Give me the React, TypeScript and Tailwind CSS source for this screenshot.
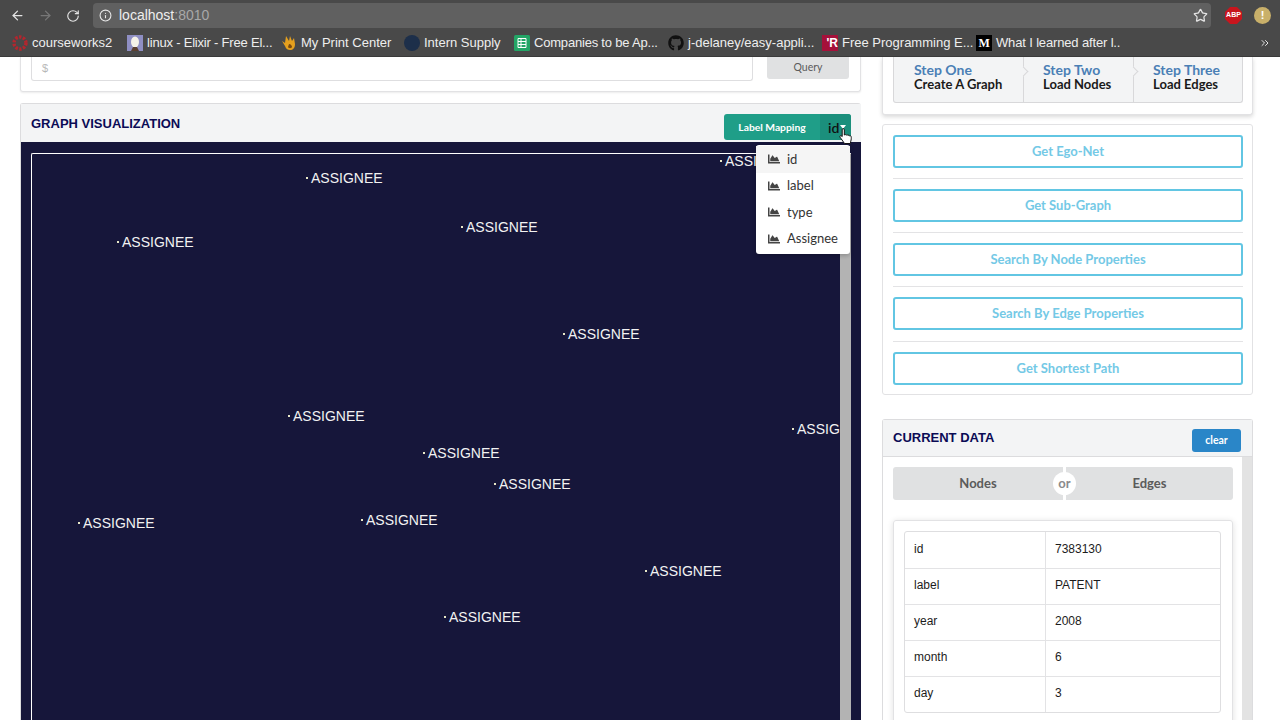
import { ArrowLeft, ArrowRight, RotateCw, Info, Star, ChevronsRight } from 'lucide-react';
import { FaChartArea, FaGithub } from 'react-icons/fa';

const labels = [
  { x: 311, y: 178 },
  { x: 466, y: 227 },
  { x: 122, y: 242 },
  { x: 568, y: 334 },
  { x: 293, y: 416 },
  { x: 428, y: 453 },
  { x: 499, y: 484 },
  { x: 83, y: 523 },
  { x: 366, y: 520 },
  { x: 650, y: 571 },
  { x: 449, y: 617 },
  { x: 725, y: 161 },
  { x: 797, y: 429 },
];

const actions = ['Get Ego-Net', 'Get Sub-Graph', 'Search By Node Properties', 'Search By Edge Properties', 'Get Shortest Path'];

const rows = [
  ['id', '7383130'],
  ['label', 'PATENT'],
  ['year', '2008'],
  ['month', '6'],
  ['day', '3'],
];

function Bookmark({ icon, text, className }: { icon: React.ReactNode; text: string; className: string }) {
  return (
    <div className={`flex items-center shrink-0 ${className}`}>
      <span className="w-4 h-4 flex items-center justify-center mr-1 shrink-0">{icon}</span>
      <span className="whitespace-nowrap">{text}</span>
    </div>
  );
}

function BrowserChrome() {
  return (
    <div className="h-[57px] shrink-0 bg-[#494949] font-['Liberation_Sans',sans-serif] text-[#eeeeee] border-b border-[#3a3a3a]">
      <div className="h-[29px] flex items-center pt-[2px]">
        <ArrowLeft className="ml-[10px] w-[15px] h-[15px] text-[#e4e4e4]" />
        <ArrowRight className="ml-[13px] w-[15px] h-[15px] text-[#777777]" />
        <RotateCw className="ml-[13px] w-[14px] h-[14px] text-[#e4e4e4]" />
        <div className="ml-[13px] w-[1118px] h-[25px] bg-[#606060] rounded-[4px] flex items-center pl-[6px] pr-[2px]">
          <Info className="w-[13px] h-[13px] text-[#e8e8e8]" />
          <span className="ml-[7px] text-[14px]">localhost<span className="text-[#a8a8a8]">:8010</span></span>
          <Star className="ml-auto mr-[1px] w-[15px] h-[15px] text-[#e4e4e4]" />
        </div>
        <div className="ml-[14px] w-[17px] h-[17px] bg-[#c8151d] [clip-path:polygon(30%_0,70%_0,100%_30%,100%_70%,70%_100%,30%_100%,0_70%,0_30%)] flex items-center justify-center text-[7px] font-bold text-white">ABP</div>
        <div className="ml-[12px] w-[17px] h-[17px] bg-[#c9b06a] rounded-full flex items-center justify-center text-[11px] font-bold text-white">!</div>
      </div>
      <div className="h-[27px] flex items-center text-[13px] pl-[12px]">
        <Bookmark
          className="w-[115px]"
          text="courseworks2"
          icon={
            <svg viewBox="0 0 16 16" className="w-4 h-4">
              <circle cx="8" cy="8" r="6" fill="none" stroke="#b3262e" strokeWidth="3.4" strokeDasharray="2.4 1.4" />
            </svg>
          }
        />
        <Bookmark
          className="w-[154px] tracking-[-0.2px]"
          text="linux - Elixir - Free El..."
          icon={
            <svg viewBox="0 0 16 16" className="w-4 h-4">
              <rect width="16" height="16" fill="#8f8fc4" />
              <ellipse cx="8" cy="7" rx="4" ry="5.5" fill="#f4f1e8" />
              <path d="M4 16l2-4h4l2 4z" fill="#5a4030" />
            </svg>
          }
        />
        <Bookmark
          className="w-[123px]"
          text="My Print Center"
          icon={
            <svg viewBox="0 0 16 16" className="w-4 h-4">
              <path d="M5 1l3 5 1-5 2 5 2-3 1 6c0 4-2 6-5 6-2 0-4-1-5-4L1 6l3 2z" fill="#e5a01e" />
              <path d="M8 9c2 0 3 2 3 3-1 2-4 1-4 0z" fill="#7b4a10" />
            </svg>
          }
        />
        <Bookmark
          className="w-[110px]"
          text="Intern Supply"
          icon={<span className="w-4 h-4 rounded-full bg-[#1d2f4a]" />}
        />
        <Bookmark
          className="w-[154px] tracking-[-0.2px]"
          text="Companies to be Ap..."
          icon={
            <svg viewBox="0 0 16 16" className="w-4 h-4">
              <rect width="16" height="16" rx="1.5" fill="#23a566" />
              <path d="M4 3.5h8v9H4zM4 6.5h8M4 9.5h8M7 3.5v9" fill="none" stroke="#ffffff" strokeWidth="1" />
            </svg>
          }
        />
        <Bookmark
          className="w-[154px]"
          text="j-delaney/easy-appli..."
          icon={<FaGithub className="w-4 h-4 text-[#111111]" />}
        />
        <Bookmark
          className="w-[154px]"
          text="Free Programming E..."
          icon={
            <span className="w-4 h-4 bg-[#a5113a] text-[12px] leading-4 font-bold text-white text-right overflow-hidden whitespace-nowrap">'R</span>
          }
        />
        <Bookmark
          className="tracking-[-0.15px]"
          text="What I learned after l.."
          icon={
            <span className="w-4 h-4 bg-black text-white text-[12px] leading-4 text-center font-bold font-['Liberation_Serif',serif]">M</span>
          }
        />
        <ChevronsRight className="ml-auto mr-[9px] w-[12px] h-[12px] text-[#e4e4e4]" />
      </div>
    </div>
  );
}

function GraphCard() {
  return (
    <div className="mt-[11px] rounded-t-[3px] border border-[#dcdcde] border-b-0 border-r-0 relative">
      <div className="h-[38px] bg-[#f3f4f5] flex items-center pl-[10px] pt-[1px] relative">
        <span className="text-[13px] font-bold text-[#0b0b55] font-['Liberation_Sans',sans-serif]">GRAPH VISUALIZATION</span>
        <div className="absolute left-[703px] top-[10px] w-[127px] h-[26px] bg-[#1f9e88] rounded-[3px] flex items-center font-['Lato',sans-serif]">
          <span className="w-[96px] pt-[1px] text-center text-white text-[10.3px] font-bold">Label Mapping</span>
          <span className="w-[31px] h-full bg-[#1b8f7c] rounded-r-[3px] flex items-center pl-[8px] text-[14px] font-semibold text-[#111111]">
            id
            <span className="ml-[1px] w-0 h-0 border-x-[3px] border-x-transparent border-t-[4px] border-t-white" />
          </span>
        </div>
      </div>
      <div className="h-[600px] bg-[#16163a] pt-[11px] pl-[10px] pr-[10px]">
        <div className="relative h-[600px] border-t border-l border-white rounded-tl-[2px] overflow-hidden flex justify-end">
          {labels.map((l) => (
            <div
              key={`${l.x}-${l.y}`}
              className="absolute flex items-center text-[14px] text-[#f2f2f2] font-['Liberation_Sans',sans-serif] leading-none"
              style={{ left: l.x - 37, top: l.y - 161 }}
            >
              <span className="w-[2px] h-[2px] bg-[#e8e8c8] mr-[3px]" />
              ASSIGNEE
            </div>
          ))}
          <div className="relative w-[11px] h-full bg-[#b3b3b3]" />
        </div>
      </div>
    </div>
  );
}

function Dropdown() {
  return (
    <div className="absolute left-[756px] top-[145px] w-[94px] h-[109px] bg-white rounded-[3px] shadow-[0_2px_4px_rgba(0,0,0,0.2)] pt-[1px] font-['Lato',sans-serif] text-[13px] text-[#333333]">
      {['id', 'label', 'type', 'Assignee'].map((item, i) => (
        <div key={item} className={`h-[26.6px] flex items-center pl-[12px] ${i === 0 ? 'bg-[#f5f5f5]' : ''}`}>
          <FaChartArea className="w-[12px] h-[12px] mr-[7px] text-[#444444]" />
          {item}
        </div>
      ))}
    </div>
  );
}

function Cursor() {
  return (
    <svg viewBox="0 0 16 18" className="absolute left-[838px] top-[127px] w-[16px] h-[18px]">
      <path
        d="M5 1.5c.8 0 1.3.6 1.3 1.3V8l.6-.2c.6-.4 1.2-.2 1.5.2.5-.3 1.2-.2 1.6.3.5-.3 1.3-.1 1.6.5.5-.2 1.4 0 1.6.8.2 1 .1 3-.4 4.5l-.5 2.4H6.5L3 11.5C2 10.3 1.6 9.5 2 9c.5-.5 1.4-.2 2.2.6V2.8c0-.7.2-1.3.8-1.3z"
        fill="#ffffff"
        stroke="#111111"
        strokeWidth="1"
      />
    </svg>
  );
}

function StepsCard() {
  const steps = [
    { title: 'Step One', sub: 'Create A Graph', w: 'w-[130px] pl-[20px]' },
    { title: 'Step Two', sub: 'Load Nodes', w: 'w-[110px] pl-[19px]' },
    { title: 'Step Three', sub: 'Load Edges', w: 'flex-1 pl-[19px]' },
  ];
  return (
    <div className="pl-[10px] pr-[9px] pb-[11px] border-x border-b border-[#e2e2e4] rounded-b-[3px] shadow-[0_2px_4px_rgba(0,0,0,0.15)] bg-white">
      <div className="h-[46px] flex bg-[#f3f4f5] border-x border-b border-[#d8d8da] rounded-b-[3px] font-['Lato',sans-serif]">
        {steps.map((s, i) => (
          <div key={s.title} className={`relative ${s.w} ${i < 2 ? 'border-r border-[#d8d8da]' : ''}`}>
            <div className="text-[14px] font-bold text-[#4a7fb5] leading-[15px] mt-[5px]">{s.title}</div>
            <div className="text-[13px] font-bold text-[#1a1a1a] leading-[13px] mt-[1px]">{s.sub}</div>
            {i < 2 && (
              <span className="absolute right-[-4px] top-[11px] w-[7px] h-[7px] rotate-45 bg-[#f3f4f5] border-t border-r border-[#d8d8da]" />
            )}
          </div>
        ))}
      </div>
    </div>
  );
}

function ActionsCard() {
  return (
    <div className="mt-[9px] h-[271px] pl-[10px] pr-[9px] pt-[10px] border border-[#e2e2e4] rounded-[3px] bg-white font-['Lato',sans-serif]">
      {actions.map((a, i) => (
        <div key={a}>
          <div className="h-[33px] border-2 border-[#62c6e3] rounded-[3px] flex items-center justify-center text-[13px] font-bold text-[#74c9e6]">{a}</div>
          {i < 4 && <div className={`border-t border-[#e3e3e5] ${i === 3 ? 'mt-[11px] mb-[10px]' : 'mt-[10px] mb-[10px]'}`} />}
        </div>
      ))}
    </div>
  );
}

function CurrentDataCard() {
  return (
    <div className="mt-[24px] border border-[#dcdcde] border-b-0 rounded-t-[3px] bg-white">
      <div className="h-[37px] bg-[#f3f4f5] border-b border-[#dcdcde] flex items-center pl-[10px] pr-[11px] justify-between">
        <span className="text-[13px] font-bold text-[#0b0b55] font-['Liberation_Sans',sans-serif]">CURRENT DATA</span>
        <span className="w-[49px] h-[23px] mt-[5px] bg-[#2a86c8] rounded-[3px] text-white text-[10.5px] font-bold flex items-center justify-center font-['Lato',sans-serif]">clear</span>
      </div>
      <div className="flex h-[300px]">
        <div className="w-[360px] pl-[10px] pt-[10px]">
          <div className="w-[340px] h-[33px] flex relative font-['Lato',sans-serif] text-[13px] font-bold text-[#5b5b5b]">
            <div className="w-[170px] bg-[#e0e1e2] rounded-l-[3px] flex items-center justify-center">Nodes</div>
            <div className="w-[3px] bg-white" />
            <div className="flex-1 bg-[#e0e1e2] rounded-r-[3px] flex items-center justify-center">Edges</div>
            <span className="absolute left-[160px] top-[5px] w-[23px] h-[23px] bg-white rounded-full flex items-center justify-center text-[#8b8b8b]">or</span>
          </div>
          <div className="mt-[20px] w-[340px] h-[260px] border border-[#e2e2e4] rounded-[3px] p-[10px] shadow-[0_1px_6px_rgba(0,0,0,0.12)]">
            <div className="w-[317px] border border-[#dedee0] rounded-[3px] font-['Liberation_Sans',sans-serif] text-[12px] text-[#1c1c1c]">
              {rows.map(([k, v], i) => (
                <div key={k} className={`h-[36px] flex items-center ${i > 0 ? 'border-t border-[#e3e3e5]' : ''}`}>
                  <div className={`w-[141px] h-full flex items-center pl-[9px] border-r border-[#e3e3e5] ${i > 0 ? 'pb-[3px]' : 'pb-[2px]'}`}>{k}</div>
                  <div className={`pl-[9px] ${i > 0 ? 'pb-[3px]' : 'pb-[2px]'}`}>{v}</div>
                </div>
              ))}
            </div>
          </div>
        </div>
        <div className="w-[10px] bg-[#e3e3e3]" />
      </div>
    </div>
  );
}

export default function App() {
  return (
    <div className="relative w-[1280px] h-[720px] overflow-hidden flex flex-col bg-white">
      <BrowserChrome />
      <div className="flex-1 min-h-0 flex pl-[20px] overflow-hidden">
        <div className="w-[841px] shrink-0">
          <div className="h-[35px] border-x border-b border-[#e2e2e4] rounded-b-[3px] shadow-[0_1px_2px_rgba(0,0,0,0.08)] flex pl-[10px]">
            <div className="w-[722px] h-[24px] border-x border-b border-[#dedee0] rounded-b-[3px] pl-[10px] text-[11px] leading-[22px] text-[#b8b8b8] font-['Liberation_Sans',sans-serif]">$</div>
            <div className="ml-[14px] w-[82px] h-[22px] bg-[#e0e1e2] rounded-b-[3px] text-[10.5px] text-[#5b5b5b] flex items-center justify-center font-['Lato',sans-serif]">Query</div>
          </div>
          <GraphCard />
        </div>
        <div className="ml-[21px] w-[371px] shrink-0">
          <StepsCard />
          <ActionsCard />
          <CurrentDataCard />
        </div>
      </div>
      <Dropdown />
      <Cursor />
    </div>
  );
}
